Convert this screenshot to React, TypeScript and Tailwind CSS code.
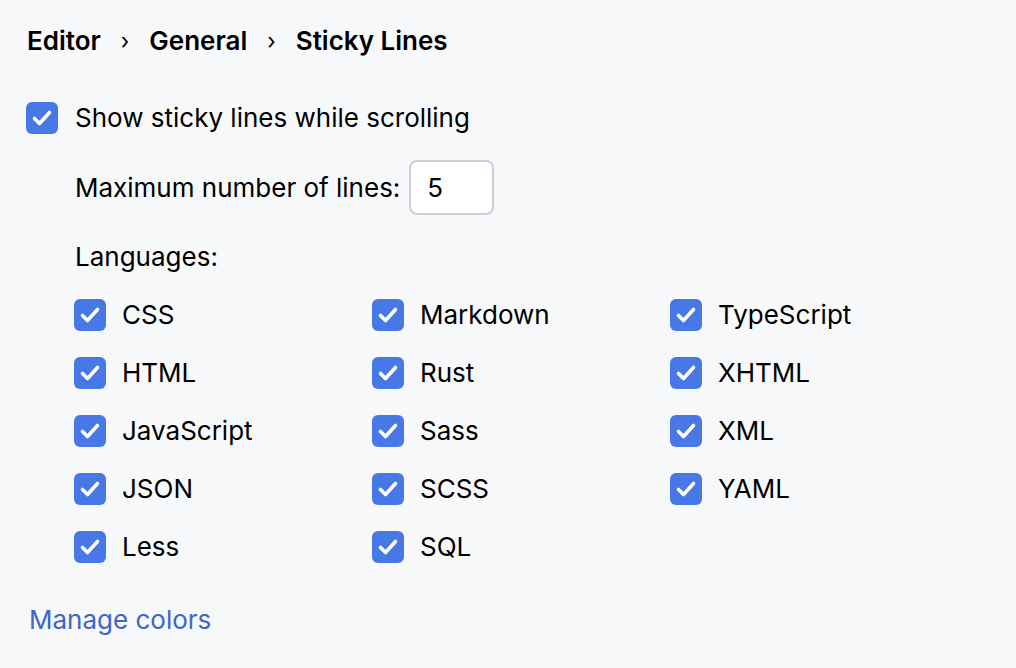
import React from "react";

function Check() {
  return (
    <div className="w-8 h-8 rounded-[6px] bg-[#4877e6] flex items-center justify-center shrink-0">
      <svg width="32" height="32" viewBox="0 0 32 32" fill="none">
        <path d="M8.5 16.5 L13.5 21.5 L23.5 10.5" stroke="white" strokeWidth="3.6" strokeLinecap="round" strokeLinejoin="round" />
      </svg>
    </div>
  );
}

const cols = [
  ["CSS", "HTML", "JavaScript", "JSON", "Less"],
  ["Markdown", "Rust", "Sass", "SCSS", "SQL"],
  ["TypeScript", "XHTML", "XML", "YAML"],
];

export default function App() {
  return (
    <div
      className="w-[1016px] h-[668px] bg-[#f7f8fa] text-black overflow-hidden text-[26px] leading-[36px]"
      style={{ fontFamily: "Inter, 'Noto Sans', sans-serif" }}
    >
      <div className="flex items-center h-[82px] pl-[27px] font-semibold">
        <span>Editor</span>
        <span className="font-normal text-[22px] mx-[20px]">›</span>
        <span>General</span>
        <span className="font-normal text-[22px] mx-[20px]">›</span>
        <span>Sticky Lines</span>
      </div>
      <div className="flex items-center gap-[17px] pl-[26px] mt-[20px] h-[32px]">
        <Check />
        <span>Show sticky lines while scrolling</span>
      </div>
      <div className="flex items-center gap-[9px] pl-[75px] mt-[26px]">
        <span>Maximum number of lines:</span>
        <div className="w-[85px] h-[55px] bg-white border-2 border-[#cbcfd9] rounded-[8px] flex items-center pl-[16px]">
          5
        </div>
      </div>
      <div className="pl-[75px] mt-[22px] h-[40px] flex items-center">Languages:</div>
      <div className="flex pl-[74px] mt-[22px]">
        {cols.map((c, i) => (
          <div key={i} className="w-[298px] flex flex-col gap-[26px]">
            {c.map((l) => (
              <div key={l} className="flex items-center gap-[16px] h-[32px]">
                <Check />
                <span>{l}</span>
              </div>
            ))}
          </div>
        ))}
      </div>
      <div className="pl-[29px] mt-[39px] text-[#3d66c7]">Manage colors</div>
    </div>
  );
}
